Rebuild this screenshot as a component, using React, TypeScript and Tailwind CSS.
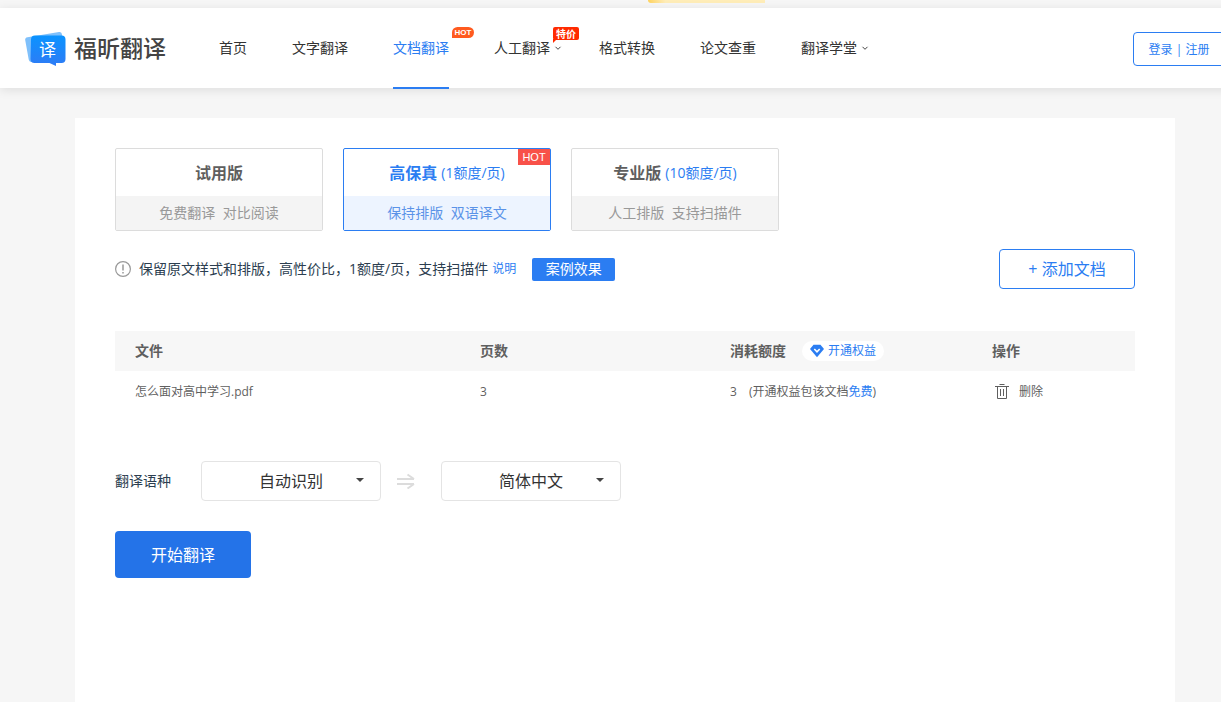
import React, { useState } from 'react';

interface NavItemProps {
  label: string;
  active?: boolean;
  hasMenu?: boolean;
  badge?: React.ReactNode;
}

const NavItem: React.FC<NavItemProps> = ({ label, active, hasMenu, badge }) => (
  <a
    href="#"
    className={`relative flex h-[81px] items-center gap-1 border-b-2 whitespace-nowrap ${
      active ? 'border-[#2b7df2] text-[#2b7df2]' : 'border-transparent text-[#333]'
    }`}
  >
    {label}
    {hasMenu && (
      <svg className="-mr-2 h-2 w-2" viewBox="0 0 8 8" fill="none" stroke="#444">
        <path d="M1.5 2.8 4 5.3l2.5-2.5" />
      </svg>
    )}
    {badge}
  </a>
);

const HotBadge: React.FC = () => (
  <span className="absolute top-[19px] left-[59px] flex h-[11px] w-[22px] items-center justify-center rounded-t-full rounded-br-full bg-[#ff5a1f] font-['Liberation_Sans',sans-serif] text-[8px] leading-none font-bold text-white">
    HOT
  </span>
);

const SaleBadge: React.FC = () => (
  <span className="absolute top-[19px] left-[59px] flex h-[13px] w-[26px] items-center justify-center rounded-xs bg-[#ff2a00] text-[10px] leading-none font-bold text-white">
    特价
    <svg className="absolute top-3 left-0 h-1 w-1" viewBox="0 0 4 4" fill="#ff2a00">
      <path d="M0 0h4L0 4z" />
    </svg>
  </span>
);

const Logo: React.FC = () => (
  <a href="#" className="flex items-center gap-2 text-[#444]">
    <span className="relative flex h-9 w-[41px] shrink-0">
      <svg className="h-9 w-[41px]" viewBox="0 0 41 36">
        <defs>
          <linearGradient id="logoBlue" x1="0" y1="0" x2="0" y2="1">
            <stop offset="0" stopColor="#0a93ff" />
            <stop offset="1" stopColor="#2f7bf5" />
          </linearGradient>
        </defs>
        <path d="M2.500 7.200 34 2.100c1.600-.2 2.400.5 2.800 1.900L38 9 8 32c-2.500.2-4-.8-4.300-2.600L.2 10C0 8.500.8 7.500 2.500 7.200z" fill="#7fc0fb" />
        <path
          d="M10 5.500h26.500a4 4 0 0 1 4 4V29a4 4 0 0 1-4 4H31v3l-6.500-3H9.500a4 4 0 0 1-4-4l.5-19.500a4 4 0 0 1 4-4z"
          fill="url(#logoBlue)"
        />
      </svg>
      <span className="absolute top-[11px] left-[14px] text-[17px] leading-[18px] text-white">译</span>
    </span>
    <span className="text-[23px] leading-8 font-medium whitespace-nowrap">福昕翻译</span>
  </a>
);

const Header: React.FC = () => (
  <header className="relative flex h-20 items-start bg-white px-[25px] shadow-[0_2px_10px_rgba(0,0,0,0.1)]">
    <div className="flex h-20 items-center">
      <Logo />
    </div>
    <nav className="ml-[53px] flex gap-[45px] text-sm">
      <NavItem label="首页" />
      <NavItem label="文字翻译" />
      <NavItem label="文档翻译" active badge={<HotBadge />} />
      <NavItem label="人工翻译" hasMenu badge={<SaleBadge />} />
      <NavItem label="格式转换" />
      <NavItem label="论文查重" />
      <NavItem label="翻译学堂" hasMenu />
    </nav>
    <button className="mt-6 ml-auto h-[34px] w-[92px] rounded border border-[#2b7df2] pt-px text-xs whitespace-nowrap text-[#2b7df2]">
      登录 | 注册
    </button>
  </header>
);

interface PlanCardProps {
  title: string;
  price?: string;
  features: string;
  hot?: boolean;
  selected: boolean;
  onSelect: () => void;
}

const PlanCard: React.FC<PlanCardProps> = ({ title, price, features, hot, selected, onSelect }) => (
  <button
    aria-pressed={selected}
    onClick={onSelect}
    className={`relative w-52 rounded-xs border ${
      selected ? 'border-[#2b7df2] text-[#2b7df2]' : 'border-[#dcdcdc] text-[#5f5f5f]'
    }`}
  >
    <span className="flex h-[47px] items-center justify-center gap-1 text-base">
      <span className="font-bold">{title}</span>
      {price && <span className="text-sm text-[#2b7df2]">{price}</span>}
    </span>
    <span
      className={`flex h-[34px] items-center justify-center text-sm whitespace-pre ${
        selected ? 'bg-[#edf4ff] text-[#5b93e8]' : 'bg-[#f4f4f4] text-[#999]'
      }`}
    >
      {features}
    </span>
    {hot && (
      <span className="absolute top-0 right-0 flex h-4 w-8 items-center justify-center bg-[#f85149] font-['Liberation_Sans',sans-serif] text-[11px] leading-none text-white">
        HOT
      </span>
    )}
  </button>
);

const plans = [
  { title: '试用版', features: '免费翻译  对比阅读' },
  { title: '高保真', price: '(1额度/页)', features: '保持排版  双语译文', hot: true },
  { title: '专业版', price: '(10额度/页)', features: '人工排版  支持扫描件' },
];

interface LanguageSelectProps {
  id: string;
  label: string;
  options: string[];
}

const LanguageSelect: React.FC<LanguageSelectProps> = ({ id, label, options }) => (
  <div className="relative">
    <select
      id={id}
      aria-label={label}
      className="h-10 w-[180px] appearance-none rounded border border-[#e4e4e4] bg-white text-center text-base text-[#333] [text-align-last:center]"
    >
      {options.map((option) => (
        <option key={option}>{option}</option>
      ))}
    </select>
    <svg className="pointer-events-none absolute top-[17px] right-[17px] h-1 w-2" viewBox="0 0 8 4" fill="#444">
      <path d="M0 0h8L4 4z" />
    </svg>
  </div>
);

const FileTable: React.FC = () => (
  <table className="mt-[42px] w-full table-fixed text-left text-[#5f5f5f]">
    <colgroup>
      <col className="w-[345px]" />
      <col className="w-[250px]" />
      <col className="w-[262px]" />
      <col />
    </colgroup>
    <thead className="bg-[#f7f7f7] text-sm">
      <tr className="h-10">
        <th className="px-5">文件</th>
        <th className="px-5">页数</th>
        <th className="px-5">
          <div className="flex items-center gap-4">
            消耗额度
            <a href="#" className="flex h-5 items-center gap-1 rounded-full bg-white px-2 text-xs font-normal text-[#2b7df2]">
              <svg className="h-[14px] w-[14px]" viewBox="0 0 14 14">
                <path d="M3.500.8h7L14 5 7 13.300 0 5z" fill="#2b7df2" />
                <path d="M4.300 5 7 7.800 9.700 5" fill="none" stroke="#fff" strokeWidth="1.600" />
              </svg>
              开通权益
            </a>
          </div>
        </th>
        <th className="px-5">操作</th>
      </tr>
    </thead>
    <tbody className="text-xs">
      <tr className="h-[42px]">
        <td className="px-5">怎么面对高中学习.pdf</td>
        <td className="px-5">3</td>
        <td className="px-5">
          <span className="mr-3">3</span>(开通权益包该文档
          <a href="#" className="text-[#2b7df2]">免费</a>)
        </td>
        <td className="px-5">
          <button className="ml-[3px] flex items-center gap-[10px]">
            <svg className="h-4 w-[14px]" viewBox="0 0 14 16" fill="none" stroke="#5f5f5f">
              <path d="M0 2.500h14M4.500 .5h5M2.500 2.500v12h9v-12M5.500 5v7M8.500 5v7" />
            </svg>
            删除
          </button>
        </td>
      </tr>
    </tbody>
  </table>
);

const App: React.FC = () => {
  const [plan, setPlan] = useState(1);

  return (
    <div className="overflow-x-hidden bg-[#f6f6f6] font-['Open_Sans','Noto_Sans_CJK_SC',sans-serif]">
      <div className="flex min-h-screen min-w-[1250px] flex-col">
        <div className="flex h-2 items-start">
          <div className="ml-[648px] h-[3px] w-[117px] rounded-bl-full bg-linear-to-r from-[#ffd35c] to-[#ffedb8] to-15%" />
        </div>
        <Header />
        <main className="mx-auto mt-[30px] w-[1100px] grow bg-white px-10 pt-[30px] pb-10">
          <div className="flex gap-5">
            {plans.map((item, index) => (
              <PlanCard key={item.title} {...item} selected={plan === index} onSelect={() => setPlan(index)} />
            ))}
          </div>

          <div className="mt-[18px] flex items-center text-sm text-[#2c3e50]">
            <svg className="mr-2 h-4 w-4" viewBox="0 0 16 16" fill="none" stroke="#999">
              <circle cx="8" cy="8" r="7.400" strokeWidth="1.200" />
              <path d="M8 3.500v6M8 11v1.500" strokeWidth="1.500" />
            </svg>
            <span>保留原文样式和排版，高性价比，1额度/页，支持扫描件</span>
            <a href="#" className="ml-1 text-xs text-[#2b7df2]">说明</a>
            <button className="ml-4 h-[23px] w-[83px] rounded-xs bg-[#2b7df2] text-white">案例效果</button>
            <button className="ml-auto h-10 w-[136px] rounded-sm border border-[#2b7df2] text-base text-[#2b7df2]">
              + 添加文档
            </button>
          </div>

          <FileTable />

          <div className="mt-12 flex items-center">
            <label htmlFor="source-language" className="mr-[30px] text-sm text-[#2c3e50]">翻译语种</label>
            <LanguageSelect id="source-language" label="源语言" options={['自动识别', '英语', '日语']} />
            <svg className="mr-[26px] ml-4 h-4 w-[18px]" viewBox="0 0 18 16" fill="none" stroke="#dcdcdc" strokeWidth="2">
              <path d="M0 6h17M10.500 1.500 17 6M0 11h17M10.500 15.500 17 11" />
            </svg>
            <LanguageSelect id="target-language" label="目标语言" options={['简体中文', '英语', '日语']} />
          </div>

          <button className="mt-[30px] h-[47px] w-[136px] rounded-sm bg-[#2473e8] text-base text-white">
            开始翻译
          </button>
        </main>
      </div>
    </div>
  );
};

export default App;
